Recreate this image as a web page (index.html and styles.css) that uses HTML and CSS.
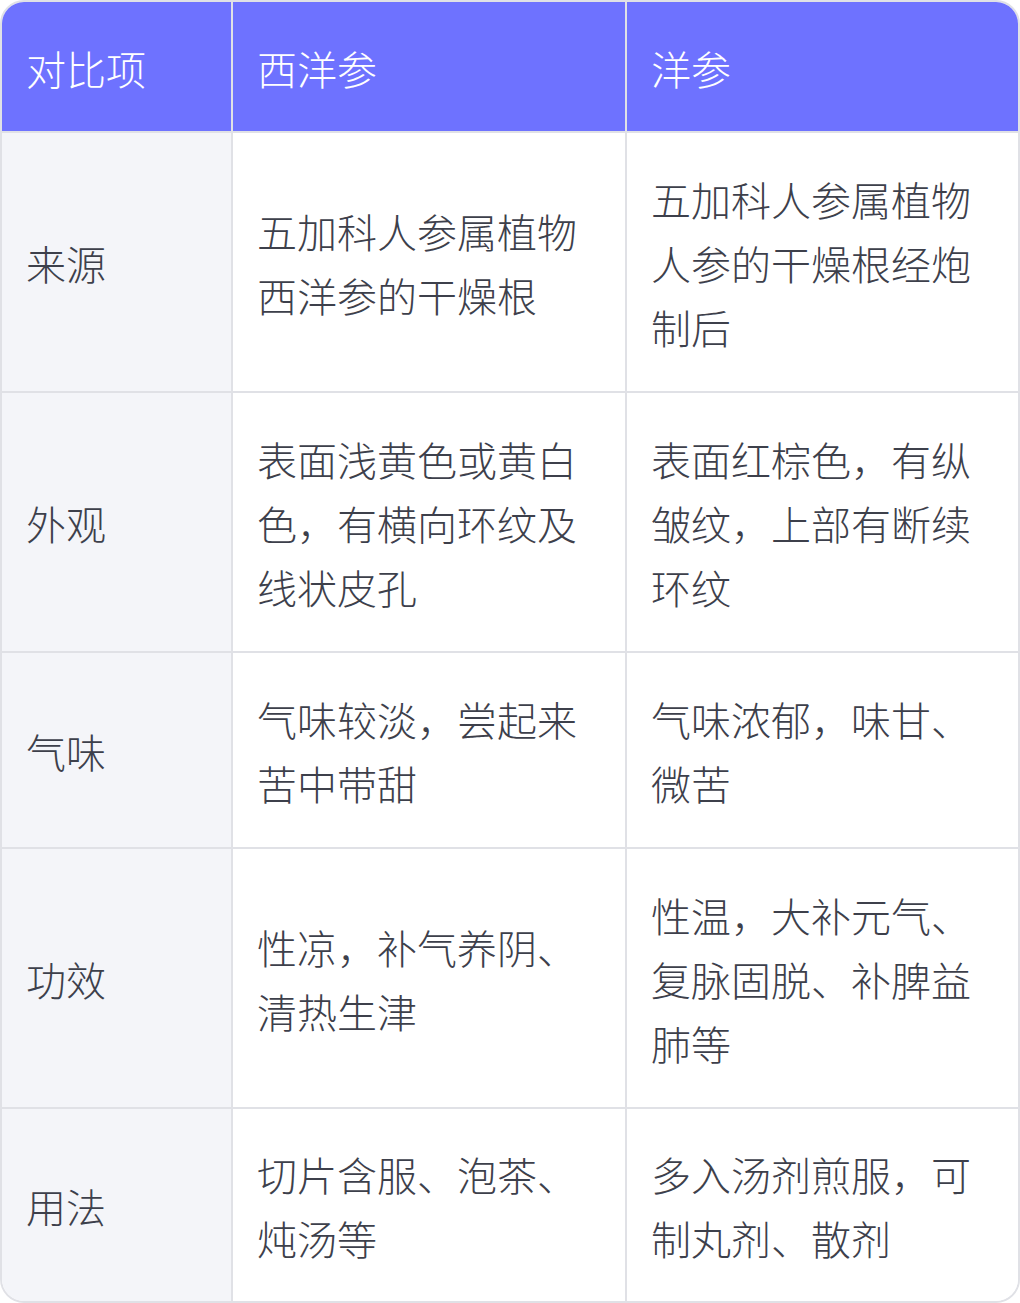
FILE: index.html
```html
<!DOCTYPE html>
<html lang="zh-CN">
<head>
<meta charset="utf-8">
<title>西洋参与洋参对比</title>
<link rel="stylesheet" href="styles.css">
</head>
<body>
<div class="table">
  <div class="cell head">对比项</div>
  <div class="cell head">西洋参</div>
  <div class="cell head last">洋参</div>

  <div class="cell label">来源</div>
  <div class="cell">五加科人参属植物西洋参的干燥根</div>
  <div class="cell last">五加科人参属植物人参的干燥根经炮制后</div>

  <div class="cell label">外观</div>
  <div class="cell">表面浅黄色或黄白色，有横向环纹及线状皮孔</div>
  <div class="cell last">表面红棕色，有纵皱纹，上部有断续环纹</div>

  <div class="cell label">气味</div>
  <div class="cell">气味较淡，尝起来苦中带甜</div>
  <div class="cell last">气味浓郁，味甘、微苦</div>

  <div class="cell label">功效</div>
  <div class="cell">性凉，补气养阴、清热生津</div>
  <div class="cell last">性温，大补元气、复脉固脱、补脾益肺等</div>

  <div class="cell label bottom">用法</div>
  <div class="cell bottom">切片含服、泡茶、炖汤等</div>
  <div class="cell last bottom">多入汤剂煎服，可制丸剂、散剂</div>
</div>
</body>
</html>
```

FILE: styles.css
```css
* {
  box-sizing: border-box;
}

html, body {
  margin: 0;
  padding: 0;
  background: #ffffff;
}

.table {
  width: 1020px;
  border: 2px solid #e0e1e6;
  border-radius: 24px;
  overflow: hidden;
  display: grid;
  grid-template-columns: 231px 394px 1fr;
  font-family: "Noto Sans CJK SC", "Noto Sans", sans-serif;
  font-weight: 300;
  font-size: 40px;
  line-height: 64px;
  color: #3d404b;
}

.cell {
  display: flex;
  align-items: center;
  padding: 34px 24px 32px;
  border-right: 2px solid #e0e1e6;
  border-bottom: 2px solid #e0e1e6;
  background: #ffffff;
}

.cell.last {
  border-right: none;
}

.cell.bottom {
  border-bottom: none;
  padding-top: 33px;
  padding-bottom: 31px;
}

.cell.head {
  background: #6e72ff;
  color: #ffffff;
  padding-top: 34px;
  padding-bottom: 31px;
}

.cell.label {
  background: #f4f5f9;
}
```
